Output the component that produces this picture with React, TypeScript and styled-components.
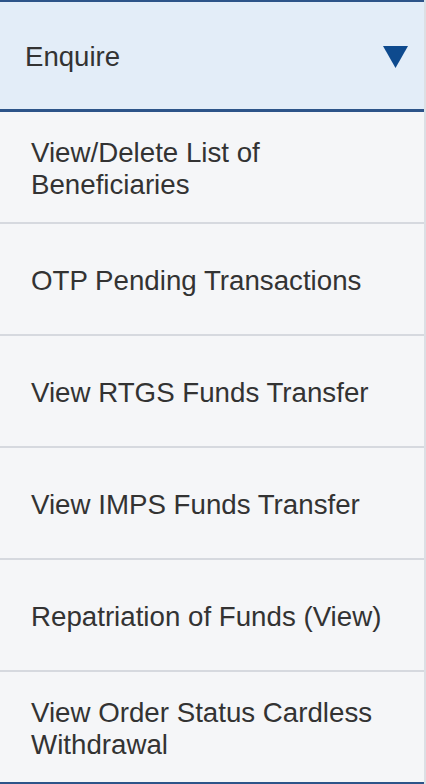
import React from 'react';
import styled, { createGlobalStyle } from 'styled-components';

const GlobalStyle = createGlobalStyle`
  html, body {
    margin: 0;
    padding: 0;
    background: #ffffff;
  }
  body {
    font-family: "Liberation Sans", Arial, sans-serif;
  }
`;

const Panel = styled.nav`
  width: 426px;
  height: 784px;
  box-sizing: border-box;
  border-right: 2px solid #dcdfe4;
  display: flex;
  flex-direction: column;
  overflow: hidden;
`;

const Header = styled.div`
  height: 112px;
  box-sizing: border-box;
  border-top: 2px solid #2d5489;
  border-bottom: 3px solid #2d5489;
  background: #e3edf8;
  display: flex;
  align-items: center;
  justify-content: space-between;
  padding: 3px 16px 0 25px;
  color: #333333;
  font-family: "Liberation Sans", Arial, sans-serif;
  font-size: 27.6px;
`;

const Caret = styled.svg`
  width: 25px;
  height: 22px;
  margin-top: -1px;
`;

const List = styled.ul`
  list-style: none;
  margin: 0;
  padding: 0;
  display: flex;
  flex-direction: column;
`;

const Item = styled.li<{ $last?: boolean }>`
  height: 112px;
  box-sizing: border-box;
  background: #f5f6f8;
  border-bottom: 2px solid ${p => (p.$last ? '#2d5489' : '#d6d9df')};
  display: flex;
  align-items: center;
  padding: 3px 30px 0 31px;
  color: #333333;
  font-family: "Liberation Sans", Arial, sans-serif;
  font-size: 27.7px;
  line-height: 32px;
`;

const items = [
  'View/Delete List of Beneficiaries',
  'OTP Pending Transactions',
  'View RTGS Funds Transfer',
  'View IMPS Funds Transfer',
  'Repatriation of Funds (View)',
  'View Order Status Cardless Withdrawal',
];

export default function App() {
  return (
    <>
      <GlobalStyle />
      <Panel>
        <Header>
          <span>Enquire</span>
          <Caret viewBox="0 0 25 22">
            <polygon points="0,0 25,0 12.5,22" fill="#0e4a8e" />
          </Caret>
        </Header>
        <List>
          {items.map((label, i) => (
            <Item key={label} $last={i === items.length - 1}>
              {label}
            </Item>
          ))}
        </List>
      </Panel>
    </>
  );
}
